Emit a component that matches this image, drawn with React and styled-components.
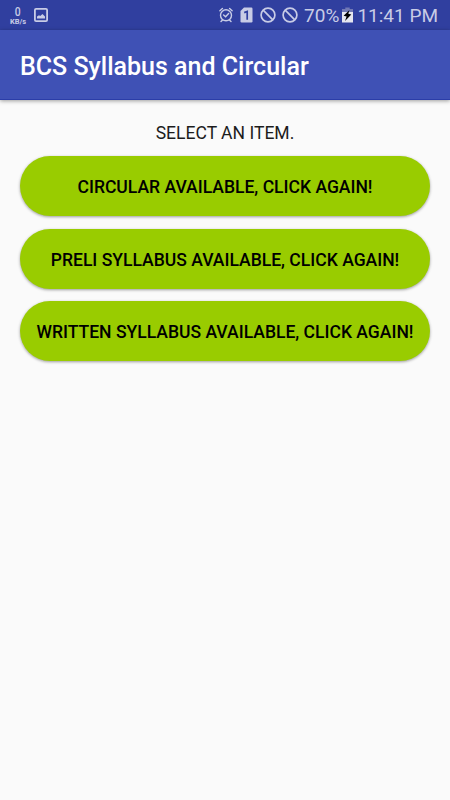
import React from "react";
import styled, { createGlobalStyle } from "styled-components";

const GlobalStyle = createGlobalStyle`
  * { box-sizing: border-box; }
  body { margin: 0; background: #fafafa; font-family: Roboto, sans-serif; }
`;

const Screen = styled.div`
  width: 450px;
  height: 800px;
  overflow: hidden;
  background: #fafafa;
`;

const StatusBar = styled.div`
  height: 30px;
  display: flex;
  align-items: center;
  justify-content: space-between;
  padding: 0 12px 0 9px;
  background: #303f9f;
  color: #c8cce6;
`;

const StatusGroup = styled.div`
  display: flex;
  align-items: center;
  height: 30px;
`;

const Icon = styled.svg`
  display: block;
  flex: none;
  width: ${(p) => p.$w}px;
  height: ${(p) => p.$h}px;
  margin-left: ${(p) => p.$gap || 0}px;
`;

const Speed = styled.div`
  width: 18px;
  display: flex;
  flex-direction: column;
  align-items: center;
  padding-top: 2px;
`;

const SpeedValue = styled.span`
  font-size: 13px;
  line-height: 12px;
  font-weight: 500;
  transform: scaleX(0.8);
`;

const SpeedUnit = styled.span`
  font-size: 7.5px;
  line-height: 8px;
  font-weight: 700;
`;

const StatusText = styled.span`
  font-size: 19px;
  line-height: 30px;
  margin-left: ${(p) => p.$gap}px;
  padding-top: 1px;
  white-space: nowrap;
`;

const AppBar = styled.header`
  height: 70px;
  display: flex;
  align-items: center;
  padding: 5px 20px 0;
  background: #3f51b5;
  border-bottom: 1px solid #2b3da8;
  box-shadow: 0 1px 4px rgba(0, 0, 0, 0.38);
`;

const Title = styled.h1`
  margin: 0;
  color: #fff;
  font-size: 25px;
  line-height: 30px;
  font-weight: 500;
  white-space: nowrap;
`;

const Content = styled.main`
  display: flex;
  flex-direction: column;
  gap: 12.5px;
  padding: 20px 20px 0;
`;

const Prompt = styled.p`
  margin: 0 0 -9px;
  height: 32.8px;
  padding-top: 1px;
  color: #1c1c1c;
  font-size: 17.55px;
  line-height: 24px;
  text-align: center;
`;

const PillButton = styled.button`
  height: 60px;
  padding: 2px 0 0;
  border: 0;
  border-radius: 30px;
  background: #99cc00;
  box-shadow: 0 1px 3px rgba(0, 0, 0, 0.38);
  color: #000;
  font-family: inherit;
  font-size: 17.55px;
  font-weight: 500;
  white-space: nowrap;
`;

const ITEMS = [
  "CIRCULAR AVAILABLE, CLICK AGAIN!",
  "PRELI SYLLABUS AVAILABLE, CLICK AGAIN!",
  "WRITTEN SYLLABUS AVAILABLE, CLICK AGAIN!",
];

const PictureIcon = () => (
  <Icon viewBox="0 0 14 14" $w={14} $h={14} $gap={7}>
    <rect x="0.9" y="0.9" width="12.2" height="12.2" rx="1.2" fill="none" stroke="#c8cce6" strokeWidth="1.8" />
    <path d="M3 10.6V8.6l2-1.4 1.2.9L8.5 6l2.5 2.6v2z" fill="#c8cce6" />
  </Icon>
);

const AlarmIcon = () => (
  <Icon viewBox="0 0 14 16" $w={14} $h={16}>
    <g fill="none" stroke="#c8cce6" strokeWidth="1.4" strokeLinecap="round">
      <circle cx="7" cy="8.3" r="5.5" />
      <path d="M.9 3.7 3.4 1.4M13.1 3.7l-2.5-2.3M3.3 13.2 2 14.6M10.7 13.2 12 14.6M4.6 8l2 1.8 3-3.2" />
    </g>
  </Icon>
);

const SimIcon = () => (
  <Icon viewBox="0 0 13 16" $w={13} $h={16} $gap={7}>
    <path d="M4 .5h7.3q1.2 0 1.2 1.2v12.6q0 1.2-1.2 1.2H1.7Q.5 15.5.5 14.3V4z" fill="#c8cce6" />
    <path d="M4.2 5.6 7.2 4.4v8.4" fill="none" stroke="#303f9f" strokeWidth="1.7" />
  </Icon>
);

const BlockedIcon = ({ gap }) => (
  <Icon viewBox="0 0 16 16" $w={16} $h={16} $gap={gap}>
    <g fill="none" stroke="#c8cce6" strokeWidth="1.7">
      <circle cx="8" cy="8" r="6.9" />
      <path d="m3.2 3.2 9.6 9.6" />
    </g>
  </Icon>
);

const BatteryIcon = () => (
  <Icon viewBox="0 0 11 16" $w={11} $h={16} $gap={3}>
    <path d="M3.3 0.5h4.4v1.5H11V6H0V2h3.3z" fill="#7179b5" />
    <path d="M0 5h11v10.5H0z" fill="#e5e6f0" />
    <path d="M7.5 3 1.6 8.7l3 .8L3 13.9l6.3-6.4-3-.7z" fill="#000" />
  </Icon>
);

export default function App() {
  return (
    <Screen>
      <GlobalStyle />
      <StatusBar>
        <StatusGroup>
          <Speed>
            <SpeedValue>0</SpeedValue>
            <SpeedUnit>KB/s</SpeedUnit>
          </Speed>
          <PictureIcon />
        </StatusGroup>
        <StatusGroup>
          <AlarmIcon />
          <SimIcon />
          <BlockedIcon gap={7} />
          <BlockedIcon gap={6} />
          <StatusText $gap={6}>70%</StatusText>
          <BatteryIcon />
          <StatusText $gap={4}>11:41 PM</StatusText>
        </StatusGroup>
      </StatusBar>
      <AppBar>
        <Title>BCS Syllabus and Circular</Title>
      </AppBar>
      <Content>
        <Prompt>SELECT AN ITEM.</Prompt>
        {ITEMS.map((label) => (
          <PillButton key={label}>{label}</PillButton>
        ))}
      </Content>
    </Screen>
  );
}
